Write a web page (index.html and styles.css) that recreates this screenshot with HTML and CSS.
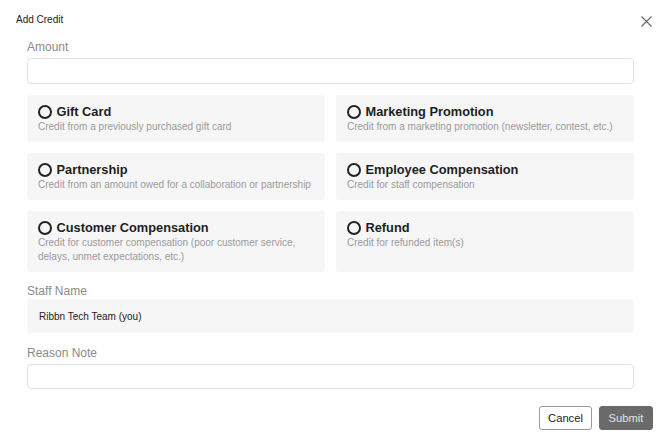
FILE: index.html
```html
<!DOCTYPE html>
<html>
<head>
<meta charset="utf-8">
<link rel="stylesheet" href="styles.css">
</head>
<body>
<div class="modal">
  <div class="header">
    <span class="heading">Add Credit</span>
    <svg class="close" width="11" height="11" viewBox="0 0 11 11"><path d="M0.5 0.5 L10.5 10.5 M10.5 0.5 L0.5 10.5" stroke="#666" stroke-width="1.1" fill="none"/></svg>
  </div>
  <div class="body">
    <div class="label first">Amount</div>
    <div class="input"></div>
    <div class="grid">
      <div class="card">
        <div class="title"><span class="radio"></span>Gift Card</div>
        <div class="desc">Credit from a previously purchased gift card</div>
      </div>
      <div class="card">
        <div class="title"><span class="radio"></span>Marketing Promotion</div>
        <div class="desc">Credit from a marketing promotion (newsletter, contest, etc.)</div>
      </div>
      <div class="card">
        <div class="title"><span class="radio"></span>Partnership</div>
        <div class="desc">Credit from an amount owed for a collaboration or partnership</div>
      </div>
      <div class="card">
        <div class="title"><span class="radio"></span>Employee Compensation</div>
        <div class="desc">Credit for staff compensation</div>
      </div>
      <div class="card">
        <div class="title"><span class="radio"></span>Customer Compensation</div>
        <div class="desc">Credit for customer compensation (poor customer service,<br>delays, unmet expectations, etc.)</div>
      </div>
      <div class="card">
        <div class="title"><span class="radio"></span>Refund</div>
        <div class="desc">Credit for refunded item(s)</div>
      </div>
    </div>
    <div class="label staff-label">Staff Name</div>
    <div class="staff">Ribbn Tech Team (you)</div>
    <div class="label reason-label">Reason Note</div>
    <div class="input reason"></div>
  </div>
  <div class="footer">
    <button class="btn cancel">Cancel</button>
    <button class="btn submit">Submit</button>
  </div>
</div>
</body>
</html>
```
FILE: styles.css
```css
* { box-sizing: border-box; }
html, body { margin: 0; padding: 0; background: #fff; }
body { font-family: "Liberation Sans", Arial, sans-serif; color: #222; }
.modal { padding: 0 17px 0 16px; }
.header {
  display: flex;
  justify-content: space-between;
  align-items: center;
  padding-top: 14px;
  height: 26px;
}
.heading { font-size: 10px; line-height: 12px; color: #222; }
.close { margin-top: 2px; margin-right: 1px; }
.body { padding: 0 19px 0 11px; }
.label { font-size: 12px; line-height: 14px; color: #8a8a8a; margin-bottom: 4px; }
.label.first { margin-top: 14px; }
.input { height: 26px; border: 1px solid #e3e3e3; border-radius: 4px; background: #fff; }
.grid {
  margin-top: 11px;
  display: grid;
  grid-template-columns: 1fr 1fr;
  gap: 11px;
}
.card {
  background: #f6f6f6;
  border-radius: 3px;
  padding: 9px 11px 8px;
}
.title {
  display: flex;
  align-items: center;
  font-size: 12.8px;
  font-weight: bold;
  line-height: 16px;
  color: #1e1e1e;
}
.radio {
  width: 14px;
  height: 14px;
  border: 2px solid #222;
  border-radius: 50%;
  margin-right: 5px;
  margin-left: -0.5px;
  flex: none;
}
.desc { font-size: 10px; line-height: 14px; color: #9a9a9a; }
.staff-label { margin-top: 12px; margin-bottom: 1px; }
.staff {
  height: 34px;
  background: #f6f6f6;
  border-radius: 4px;
  padding-left: 12px;
  display: flex;
  align-items: center;
  font-size: 10px;
  color: #222;
}
.reason-label { margin-top: 13px; }
.reason { height: 25px; }
.footer {
  display: flex;
  justify-content: flex-end;
  gap: 7px;
  margin-top: 17px;
}
.btn {
  height: 24px;
  border-radius: 3px;
  font-family: "Liberation Sans", Arial, sans-serif;
  font-size: 11.2px;
  padding: 0;
}
.cancel { width: 53px; background: #fff; border: 1px solid #9a9a9a; color: #222; }
.submit { width: 54px; background: #6a6a6a; border: 1px solid #6a6a6a; color: #e2e2e2; }
```
